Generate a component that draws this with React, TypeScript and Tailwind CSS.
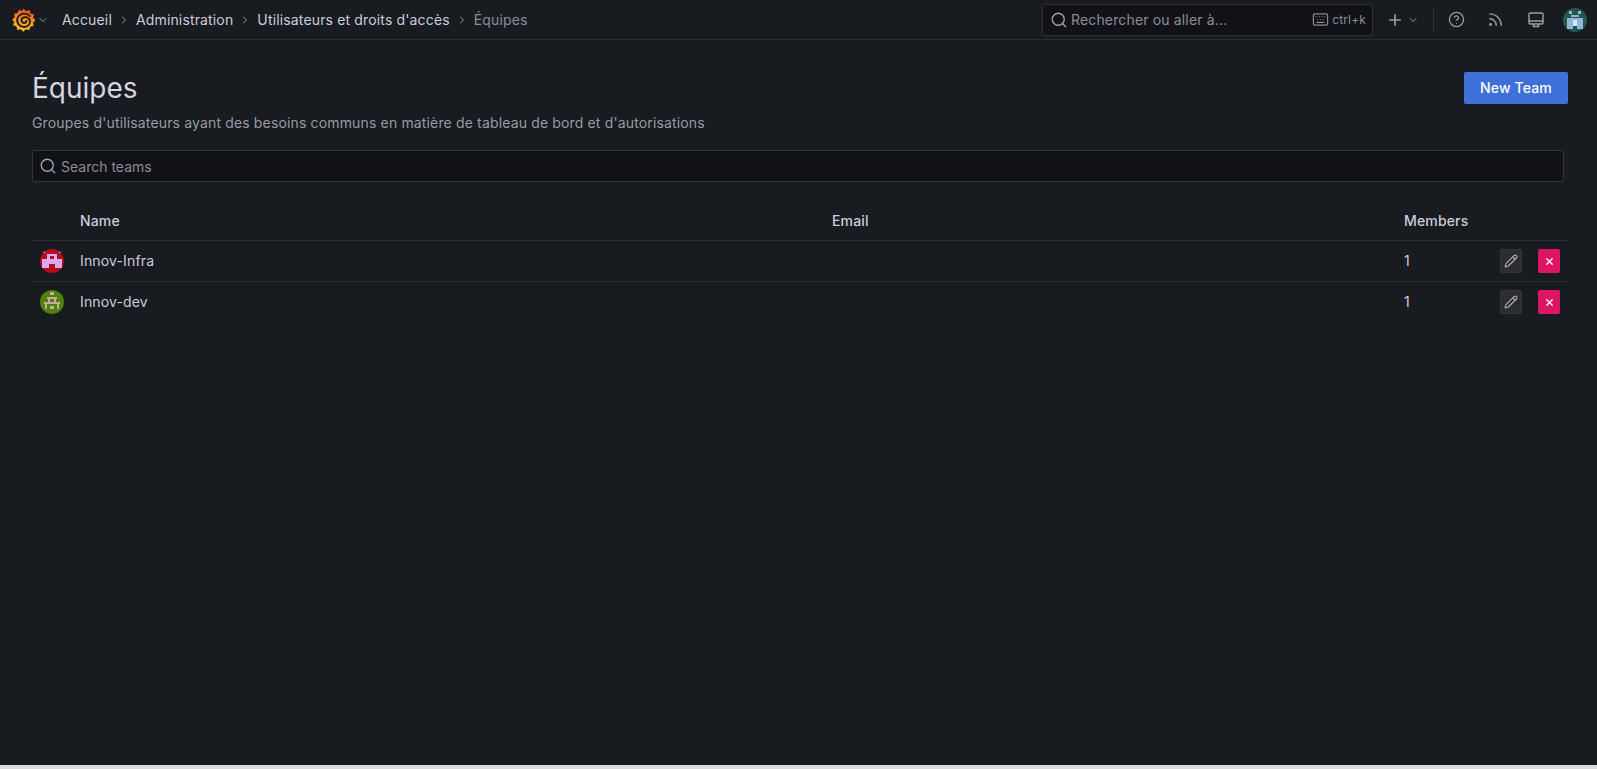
import { ChevronDown, ChevronRight, CircleHelp, Keyboard, Pencil, Plus, Rss, Search, X } from "lucide-react";

const crumbs = ["Accueil", "Administration", "Utilisateurs et droits d'accès"];

const teamCols = "grid grid-cols-[48px_752px_572px_96px_38px_30px] items-center";

function GrafanaLogo() {
  return (
    <svg width="24" height="25" viewBox="0 0 24 25">
      <defs>
        <linearGradient id="grafana-fill" x1="0.3" y1="1" x2="0.5" y2="0">
          <stop offset="0" stopColor="#fcc21b" />
          <stop offset="0.55" stopColor="#f7921e" />
          <stop offset="1" stopColor="#ef4f22" />
        </linearGradient>
      </defs>
      <path
        d="M11.500 1.500l2.500 2.800 3.600-1.200.8 3.500 3.600.9-.9 3.300 2.400 2.400-2.500 2.400.7 3.400-3.400.8-1.200 3.500-3.300-1-2.600 2.400-2.400-2.500-3.500.8-.8-3.500-3.400-1.200 1-3.300L.2 12.600l2.600-2.400-.6-3.500 3.500-.6 1.300-3.300 3 1.200z"
        fill="url(#grafana-fill)"
      />
      <path
        d="M18 9C15 5.500 8 5.500 5.500 11C4 16 8 20 12 20C16 20 18.500 17 18 14C17.500 10.500 13 9 10.500 11C8.500 13 9.500 16 12 16C13.500 16 14.500 15 14.500 13.800"
        fill="none"
        stroke="#181b1f"
        strokeWidth="1.800"
        strokeLinecap="round"
      />
    </svg>
  );
}

function RedAvatar() {
  return (
    <svg width="24" height="24" viewBox="0 0 24 24" className="rounded-full">
      <rect width="24" height="24" fill="#b70e1c" />
      <rect x="3" y="2" width="2" height="2" fill="#d8a9ec" />
      <rect x="19" y="2" width="2" height="2" fill="#d8a9ec" />
      <path d="M7 5h10v5h5v9h-7v-4h-6v4H2v-9h5zM10 7v3h4V7z" fill="#d8a9ec" fillRule="evenodd" />
    </svg>
  );
}

function GreenAvatar() {
  return (
    <svg width="24" height="24" viewBox="0 0 24 24" className="rounded-full">
      <rect width="24" height="24" fill="#4f7f0c" />
      <g fill="#c9ab96">
        <rect x="10" y="2" width="4" height="3" />
        <rect x="7" y="7" width="10" height="2" />
        <rect x="8" y="9" width="2" height="4" />
        <rect x="14" y="9" width="2" height="4" />
        <rect x="4" y="12" width="16" height="2" />
        <rect x="5" y="14" width="2" height="5" />
        <rect x="17" y="14" width="2" height="5" />
        <rect x="10" y="16" width="4" height="3" />
      </g>
    </svg>
  );
}

function UserAvatar() {
  return (
    <svg width="24" height="24" viewBox="0 0 24 24" className="rounded-full">
      <rect width="24" height="24" fill="#28564a" />
      <g fill="#8db6da">
        <rect x="6" y="3" width="3" height="3" />
        <rect x="15" y="3" width="3" height="3" />
        <rect x="8" y="7" width="8" height="2" />
        <rect x="4" y="10" width="16" height="5" />
        <rect x="4" y="15" width="6" height="6" />
        <rect x="14" y="15" width="6" height="6" />
      </g>
      <rect x="10" y="12" width="4" height="6" fill="#d9e4ec" />
    </svg>
  );
}

function TopBar() {
  return (
    <header className="flex h-[40px] shrink-0 items-center border-b border-[#2c2e33] pl-[12px] pr-[10px]">
      <GrafanaLogo />
      <ChevronDown size={12} strokeWidth={2} className="ml-[1px] text-[#8e8f99]" />
      <nav className="ml-[13px] flex items-center text-sm tracking-[0.15px] text-[#ccccdc]">
        {crumbs.map((crumb) => (
          <span key={crumb} className="flex items-center">
            <span>{crumb}</span>
            <ChevronRight size={12} strokeWidth={2} className="mx-[6px] text-[#9a9ba5]" />
          </span>
        ))}
        <span className="text-[#8b8c95]">Équipes</span>
      </nav>
      <div className="ml-auto flex h-[32px] w-[331px] items-center rounded-[2px] border border-[#2e3035] bg-[#111217] pl-[7px] pr-[6px] text-sm tracking-[0.15px] text-[#8b8c95]">
        <Search size={18} strokeWidth={1.7} className="text-[#a5a6b0]" />
        <span className="ml-[3px]">Rechercher ou aller à...</span>
        <Keyboard size={17} strokeWidth={1.7} className="ml-auto text-[#8b8c95]" />
        <span className="ml-[3px] text-xs">ctrl+k</span>
      </div>
      <Plus size={18} strokeWidth={2.2} className="ml-[13px] text-[#9a9ba5]" />
      <ChevronDown size={12} strokeWidth={2} className="ml-[3px] text-[#9a9ba5]" />
      <div className="ml-[14px] h-[24px] w-px bg-[#34363b]" />
      <CircleHelp size={17} strokeWidth={1.8} className="ml-[14px] text-[#9a9ba5]" />
      <Rss size={17} strokeWidth={2} className="ml-[22px] text-[#9a9ba5]" />
      <svg width="16" height="16" viewBox="0 0 16 16" fill="none" stroke="#9a9ba5" strokeWidth="1.500" className="ml-[24px]">
        <rect x="1" y="1" width="14" height="11" rx="1.500" />
        <path d="M1 9h14M5.500 12v2.500h5V12" />
      </svg>
      <span className="ml-[19px] flex">
        <UserAvatar />
      </span>
    </header>
  );
}

function TeamRow({ name, avatar }: { name: string; avatar: React.ReactNode }) {
  return (
    <div className={`${teamCols} h-[41px] border-t border-[#2c2e33] text-sm tracking-[0.15px] text-[#ccccdc]`}>
      <div className="flex pl-[8px]">{avatar}</div>
      <div>{name}</div>
      <div />
      <div>1</div>
      <button type="button" className="flex h-[24px] w-[22px] items-center justify-center rounded-[2px] border border-[#34363c] bg-[#2b2d33] text-[#a8a9b3]">
        <Pencil size={14} strokeWidth={2} />
      </button>
      <button type="button" className="flex h-[24px] w-[22px] items-center justify-center rounded-[2px] bg-[#dd1562] text-white">
        <X size={11} strokeWidth={2.8} />
      </button>
    </div>
  );
}

export default function App() {
  return (
    <div className="flex h-screen flex-col overflow-hidden bg-[#181b1f] font-['Inter',sans-serif] text-[#ccccdc]">
      <TopBar />
      <main className="flex-1 pl-[32px] pr-[29px]">
        <div className="flex justify-between pt-[32px]">
          <div>
            <h1 className="text-[28px] leading-[32px] font-normal text-[#d5d5e2]">Équipes</h1>
            <p className="mt-[9px] text-sm leading-[20px] tracking-[0.15px] text-[#989aa3]">
              Groupes d'utilisateurs ayant des besoins communs en matière de tableau de bord et d'autorisations
            </p>
          </div>
          <button type="button" className="h-[32px] w-[104px] rounded-[2px] bg-[#3d71d9] text-sm font-medium tracking-[0.15px] text-white">
            New Team
          </button>
        </div>
        <div className="mt-[17px] mr-[4px] flex h-[32px] items-center rounded-[2px] border border-[#34363b] bg-[#111217] pl-[6px] text-sm text-[#8b8c95]">
          <Search size={18} strokeWidth={1.7} className="text-[#a5a6b0]" />
          <span className="ml-[4px] pt-[2px]">Search teams</span>
        </div>
        <div className="mt-[16px]">
          <div className={`${teamCols} h-[42px] pt-[4px] text-sm font-medium tracking-[0.15px] text-[#ccccdc]`}>
            <div />
            <div>Name</div>
            <div>Email</div>
            <div>Members</div>
          </div>
          <TeamRow name="Innov-Infra" avatar={<RedAvatar />} />
          <TeamRow name="Innov-dev" avatar={<GreenAvatar />} />
        </div>
      </main>
      <div className="h-[4px] shrink-0 bg-[#dcdcdc]" />
    </div>
  );
}
